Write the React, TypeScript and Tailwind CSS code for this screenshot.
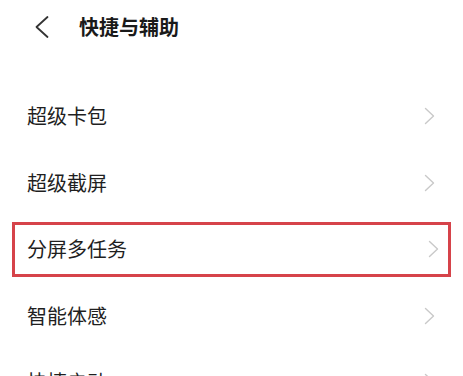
import { ReactNode } from 'react'

const items = ['超级卡包', '超级截屏', '分屏多任务', '智能体感', '快捷启动']

function Chevron() {
  return (
    <svg width="11" height="18" viewBox="0 0 11 18" fill="none" className="shrink-0">
      <path d="M1.5 1.5 L9.5 9 L1.5 16.5" stroke="#c9c9c9" strokeWidth="1.4" strokeLinecap="round" strokeLinejoin="round" />
    </svg>
  )
}

function Row({ label, highlight }: { label: string; highlight?: boolean }): ReactNode {
  if (highlight) {
    return (
      <div className="h-[66.5px] flex items-center">
        <div className="mx-[12px] h-[55px] flex-1 flex items-center justify-between border-[3px] border-[#d6434a] pl-[12px] pr-[9px]">
          <span className="text-[20px] text-[#1f1f1f]">{label}</span>
          <Chevron />
        </div>
      </div>
    )
  }
  return (
    <div className="h-[66.5px] flex items-center justify-between pl-[27px] pr-[28px]">
      <span className="text-[20px] text-[#1f1f1f]">{label}</span>
      <Chevron />
    </div>
  )
}

export default function App() {
  return (
    <div className="w-[463px] h-[376px] overflow-hidden bg-white" style={{ fontFamily: '"Noto Sans CJK SC", "Noto Sans", sans-serif' }}>
      {/* Header */}
      <div className="h-[54px] flex items-center pl-[34px]">
        <svg width="16" height="24" viewBox="0 0 16 24" fill="none">
          <path d="M13.5 2 L2.5 12 L13.5 22" stroke="#333" strokeWidth="1.8" strokeLinecap="round" strokeLinejoin="round" />
        </svg>
        <span className="ml-[29px] text-[20px] font-semibold text-[#1a1a1a]">快捷与辅助</span>
      </div>

      <div className="pt-[29px]">
        {items.map(label => (
          <Row key={label} label={label} highlight={label === '分屏多任务'} />
        ))}
      </div>
    </div>
  )
}
